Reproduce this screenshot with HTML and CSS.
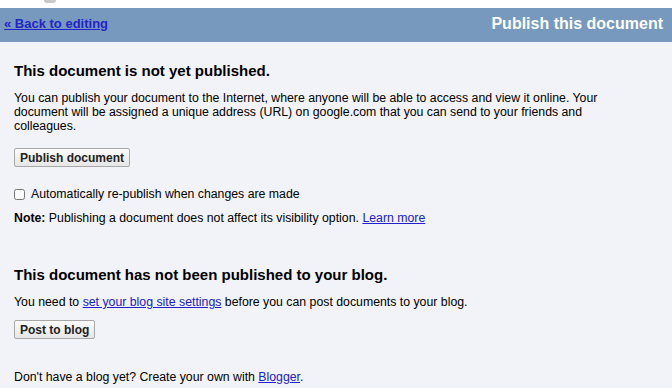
FILE: index.html
```html
<!DOCTYPE html>
<html lang="en">
<head>
  <meta charset="UTF-8" />
  <title>Publish this document</title>
  <link rel="stylesheet" href="styles.css">
</head>
<body>

<div class="topstrip"><span class="logo-edge"></span></div>

<div class="header">
  <a href="#" class="back">« Back to editing</a>
  <div class="title">Publish this document</div>
</div>

<div class="content">
  <div class="section">
    <h2>This document is not yet published.</h2>
    <p class="desc">You can publish your document to the Internet, where anyone will be able to access and view it online. Your document will be assigned a unique address (URL) on google.com that you can send to your friends and colleagues.</p>
    <button class="btn">Publish document</button>
    <label class="check"><input type="checkbox"> Automatically re-publish when changes are made</label>
    <p class="note"><b>Note:</b> Publishing a document does not affect its visibility option. <a href="#">Learn more</a></p>
  </div>

  <div class="section blog">
    <h2>This document has not been published to your blog.</h2>
    <p class="desc">You need to <a href="#">set your blog site settings</a> before you can post documents to your blog.</p>
    <button class="btn">Post to blog</button>
    <p class="own">Don't have a blog yet? Create your own with <a href="#">Blogger</a>.</p>
  </div>
</div>

</body>
</html>
```

FILE: styles.css
```css
body {
  margin: 0;
  background-color: #f2f3f8;
  color: #000;
  font-family: "Liberation Sans", Arial, sans-serif;
  font-size: 12.3px;
  overflow: hidden;
}
a {
  color: #2020cc;
}
.topstrip {
  height: 8px;
  background: #fff;
  position: relative;
}
.logo-edge {
  position: absolute;
  left: 44px;
  top: 0;
  width: 12px;
  height: 3px;
  border-radius: 0 0 6px 6px;
  background: #c8c8c8;
}
.header {
  background-color: #7699bd;
  height: 34px;
  display: flex;
  align-items: center;
  justify-content: space-between;
  padding: 0 9px 0 4px;
}
.back {
  font-size: 13px;
  font-weight: bold;
  color: #2424c8;
  margin-top: -4px;
}
.title {
  font-size: 16px;
  font-weight: bold;
  color: #fff;
  margin-top: -2px;
}
.content {
  padding: 20px 14px 0 14px;
}
h2 {
  font-size: 15px;
  font-weight: bold;
  margin: 0 0 11px 0;
  line-height: 18px;
}
.desc {
  margin: 0;
  line-height: 14px;
  max-width: 610px;
}
.btn {
  display: block;
  font-family: "Liberation Sans", Arial, sans-serif;
  font-size: 12px;
  font-weight: bold;
  color: #222;
  background: linear-gradient(#fbfbfb, #e6e6e6);
  border: 1px solid #a8a8a8;
  border-radius: 2px;
  height: 19px;
  padding: 0 5px;
  margin: 15px 0 0 0;
}
.check {
  display: flex;
  align-items: center;
  margin-top: 20px;
  line-height: 14px;
}
.check input {
  width: 11px;
  height: 11px;
  margin: 0 6px 0 0;
}
.note {
  margin: 10px 0 0 0;
  line-height: 14px;
}
.blog {
  margin-top: 41px;
}
.blog .btn {
  margin-top: 11px;
}
.own {
  margin: 31px 0 0 0;
  line-height: 14px;
}
```
